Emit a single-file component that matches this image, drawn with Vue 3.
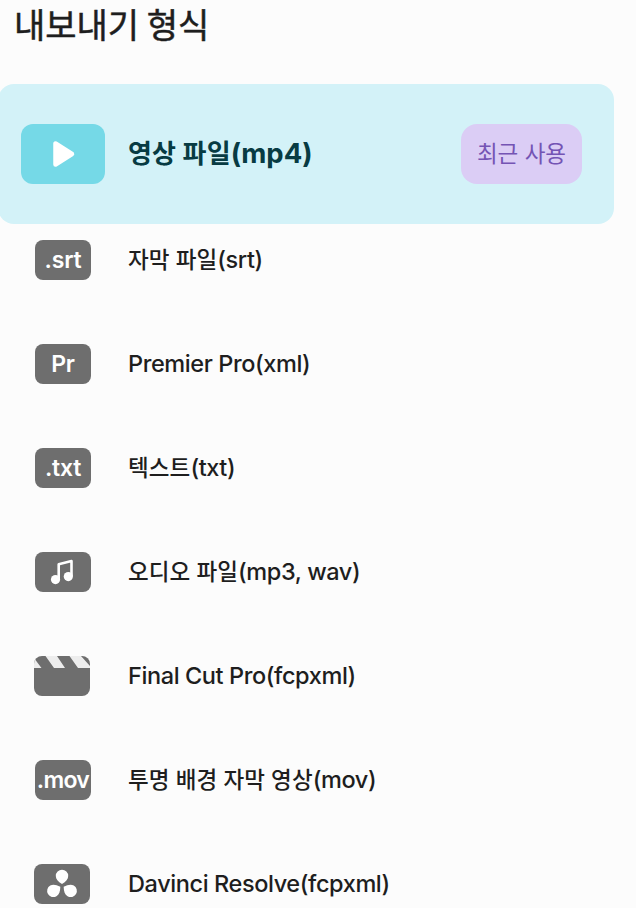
<template>
  <main class="export-panel">
    <h1 class="title">내보내기 형식</h1>

    <button
      type="button"
      class="format-main"
      :class="{ selected: current === 'mp4' }"
      @click="current = 'mp4'"
    >
      <span class="play-icon">
        <svg width="84" height="60" viewBox="0 0 84 60">
          <path d="M34.500 19.500v21l16.500-10.500z" fill="#fff" stroke="#fff" stroke-width="4.500" stroke-linejoin="round" />
        </svg>
      </span>
      <span class="main-label"><span class="ko">영상 파일</span>(mp4)</span>
      <span class="recent">최근 사용</span>
    </button>

    <ul class="formats">
      <li v-for="item in formats" :key="item.id" class="format" @click="current = item.id">
        <span class="icon" :class="'icon-' + item.id">
          <template v-if="item.tag">{{ item.tag }}</template>
          <!-- нота -->
          <svg v-else-if="item.id === 'audio'" width="56" height="40" viewBox="0 0 56 40">
            <path d="M23.700 27.500V12.200l12.800-3.200v15" fill="none" stroke="#fff" stroke-width="2.600" stroke-linejoin="round" />
            <circle cx="20.500" cy="27.600" r="4.600" fill="#fff" />
            <circle cx="33.300" cy="24.600" r="4.600" fill="#fff" />
          </svg>
          <!-- хлопушка -->
          <svg v-else-if="item.id === 'final'" width="56" height="40" viewBox="0 0 56 40">
            <path d="M0 2l7.500 10H0zM11.500 0h11.500l8 12H20zM35.500 0h11.500l9 10v2H44z" fill="#ededed" />
          </svg>
          <svg v-else width="56" height="40" viewBox="0 0 56 40">
            <g fill="#fff">
              <path id="petal" d="M28 20c-4-2.500-6.200-4.900-6.200-8.100a6.200 6.200 0 0 1 12.400 0c0 3.200-2.200 5.600-6.200 8.100z" />
              <use href="#petal" transform="rotate(120 28 21.900)" />
              <use href="#petal" transform="rotate(240 28 21.900)" />
            </g>
          </svg>
        </span>
        <span class="label"><span v-if="item.ko" class="ko">{{ item.ko }}</span>{{ item.text }}</span>
      </li>
    </ul>
  </main>
</template>

<script setup>
import { ref } from 'vue'

const current = ref('mp4')

const formats = [
  { id: 'srt', tag: '.srt', ko: '자막 파일', text: '(srt)' },
  { id: 'premier', tag: 'Pr', text: 'Premier Pro(xml)' },
  { id: 'txt', tag: '.txt', ko: '텍스트', text: '(txt)' },
  { id: 'audio', ko: '오디오 파일', text: '(mp3, wav)' },
  { id: 'final', text: 'Final Cut Pro(fcpxml)' },
  { id: 'mov', tag: '.mov', ko: '투명 배경 자막 영상', text: '(mov)' },
  { id: 'davinci', text: 'Davinci Resolve(fcpxml)' }
]
</script>

<style>
body {
  background: #fcfcfc;
  overflow: hidden;
}
</style>

<style scoped>
.export-panel {
  height: 908px;
  overflow: hidden;
  font-family: Inter, "Noto Sans CJK KR", sans-serif;
  color: #1e1e1e;
}

.title {
  height: 84px;
  margin: 0;
  padding-left: 14px;
  box-sizing: border-box;
  font-size: 34px;
  font-weight: 400;
  line-height: 51px;
  word-spacing: -2px;
  -webkit-text-stroke: 0.5px #1e1e1e;
}

.format-main {
  display: flex;
  align-items: center;
  width: 616px;
  height: 140px;
  margin-left: -2px;
  padding: 0 32px 0 23px;
  box-sizing: border-box;
  border: none;
  border-radius: 16px;
  background: none;
  font-family: inherit;
  cursor: pointer;
}
.format-main.selected {
  background: #d3f2f8;
}

.play-icon {
  width: 84px;
  height: 60px;
  border-radius: 12px;
  background: #75d9e7;
}
.play-icon svg {
  display: block;
}

.main-label {
  margin-left: 23px;
  padding-bottom: 1px;
  color: #073b43;
  font-size: 27.500px;
  font-weight: 700;
  line-height: 38px;
  white-space: nowrap;
}
.main-label .ko {
  font-size: 26px;
  letter-spacing: 0.200px;
}

.recent {
  width: 121px;
  height: 60px;
  margin-left: auto;
  border-radius: 16px;
  background: #dbcdf5;
  color: #7454b4;
  font-size: 22.500px;
  line-height: 60px;
  text-align: center;
}

.formats {
  display: flex;
  flex-direction: column;
  gap: 64px;
  margin: 0;
  padding: 16px 0 0 35px;
  list-style: none;
}
.format {
  display: flex;
  align-items: center;
  height: 40px;
  cursor: pointer;
}

.icon {
  display: flex;
  align-items: center;
  justify-content: center;
  flex: none;
  width: 56px;
  height: 40px;
  border-radius: 8px;
  overflow: hidden;
  background: #6e6e6e;
  color: #fff;
  font-size: 23px;
  font-weight: 600;
  letter-spacing: -0.2px;
}
.icon-mov {
  letter-spacing: -0.7px;
}
.icon-final,
.icon-davinci {
  margin: 0 1px 0 -1px;
}

.label {
  margin-left: 37px;
  font-size: 23.500px;
  font-weight: 500;
  letter-spacing: -0.400px;
  line-height: 40px;
  white-space: nowrap;
}
.label .ko {
  font-size: 22.500px;
  letter-spacing: 0.100px;
}
</style>
